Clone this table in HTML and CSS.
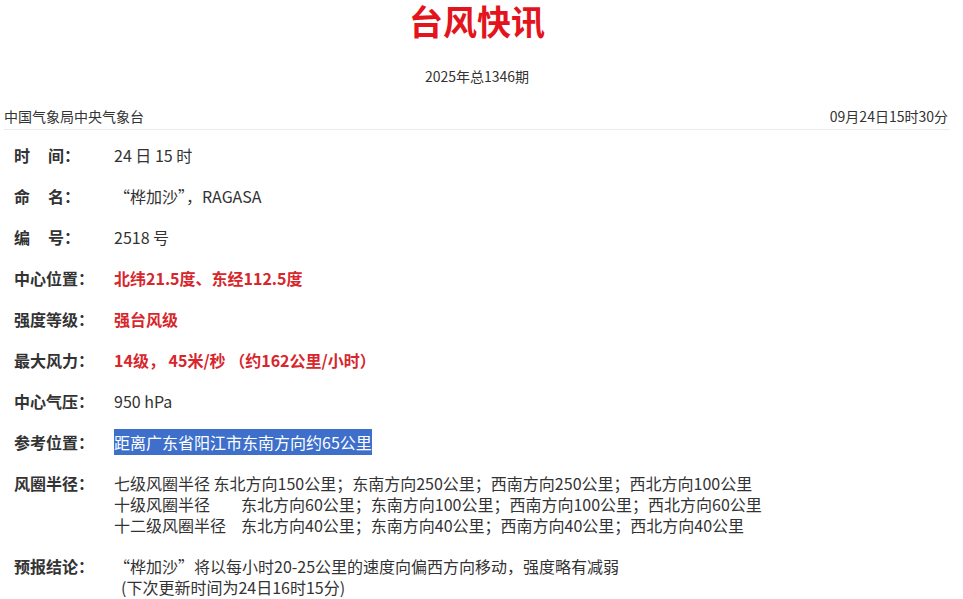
FILE: index.html
```html
<!DOCTYPE html>
<html lang="zh-CN">
<head>
<meta charset="utf-8">
<title>台风快讯</title>
<link rel="stylesheet" href="styles.css">
</head>
<body>
<div class="page">
  <h1 class="title">台风快讯</h1>
  <div class="issue">2025年总1346期</div>
  <div class="meta">
    <span>中国气象局中央气象台</span>
    <span>09月24日15时30分</span>
  </div>
  <div class="rows">
    <div class="label">时<span class="sp"></span>间：</div>
    <div class="value">24 日 15 时</div>

    <div class="label">命<span class="sp"></span>名：</div>
    <div class="value">“桦加沙”，RAGASA</div>

    <div class="label">编<span class="sp"></span>号：</div>
    <div class="value">2518 号</div>

    <div class="label">中心位置：</div>
    <div class="value red">北纬21.5度、东经112.5度</div>

    <div class="label">强度等级：</div>
    <div class="value red">强台风级</div>

    <div class="label">最大风力：</div>
    <div class="value red">14级， 45米/秒 （约162公里/小时）</div>

    <div class="label">中心气压：</div>
    <div class="value">950 hPa</div>

    <div class="label">参考位置：</div>
    <div class="value"><span class="sel">距离广东省阳江市东南方向约65公里</span></div>

    <div class="label">风圈半径：</div>
    <div class="value">
      <div class="line"><span class="lv">七级风圈半径 </span>东北方向150公里；东南方向250公里；西南方向250公里；西北方向100公里</div>
      <div class="line"><span class="lv fixed">十级风圈半径</span>东北方向60公里；东南方向100公里；西南方向100公里；西北方向60公里</div>
      <div class="line"><span class="lv fixed">十二级风圈半径</span>东北方向40公里；东南方向40公里；西南方向40公里；西北方向40公里</div>
    </div>

    <div class="label">预报结论：</div>
    <div class="value">
      <div class="line">“桦加沙”将以每小时20-25公里的速度向偏西方向移动，强度略有减弱</div>
      <div class="line note">(下次更新时间为24日16时15分)</div>
    </div>
  </div>
</div>
</body>
</html>
```

FILE: styles.css
```css
* { box-sizing: border-box; }
html, body { margin: 0; padding: 0; background: #fff; }
body {
  font-family: "Microsoft YaHei", "Noto Sans CJK SC", "Noto Sans", sans-serif;
  color: #333;
}
.page {
  width: 946px;
  margin-left: 4px;
}
.title {
  margin: 0;
  line-height: 42px;
  text-align: center;
  font-size: 34px;
  font-weight: 700;
  color: #e3141c;
}
.issue {
  margin-top: 24px;
  text-align: center;
  font-size: 14px;
  line-height: 20px;
  color: #333;
}
.meta {
  margin-top: 20px;
  display: flex;
  justify-content: space-between;
  font-size: 14px;
  line-height: 20px;
  padding-bottom: 3px;
  border-bottom: 1px solid #ececec;
  padding-right: 2px;
}
.rows {
  display: grid;
  grid-template-columns: 100px 1fr;
  row-gap: 20px;
  padding-left: 10px;
  padding-top: 15px;
  font-size: 16px;
  line-height: 21px;
}
.label {
  font-weight: 700;
  color: #333;
  white-space: nowrap;
}
.sp { display: inline-block; width: 18px; }
.value { color: #333; }
.line { height: 21px; white-space: nowrap; }
.red { color: #d7262c; font-weight: 700; }
.sel {
  background: #3d6fcb;
  color: #fff;
  padding: 1px 0;
}
.lv { white-space: pre; }
.lv.fixed { display: inline-block; width: 127px; }
.note { padding-left: 7px; }
```
